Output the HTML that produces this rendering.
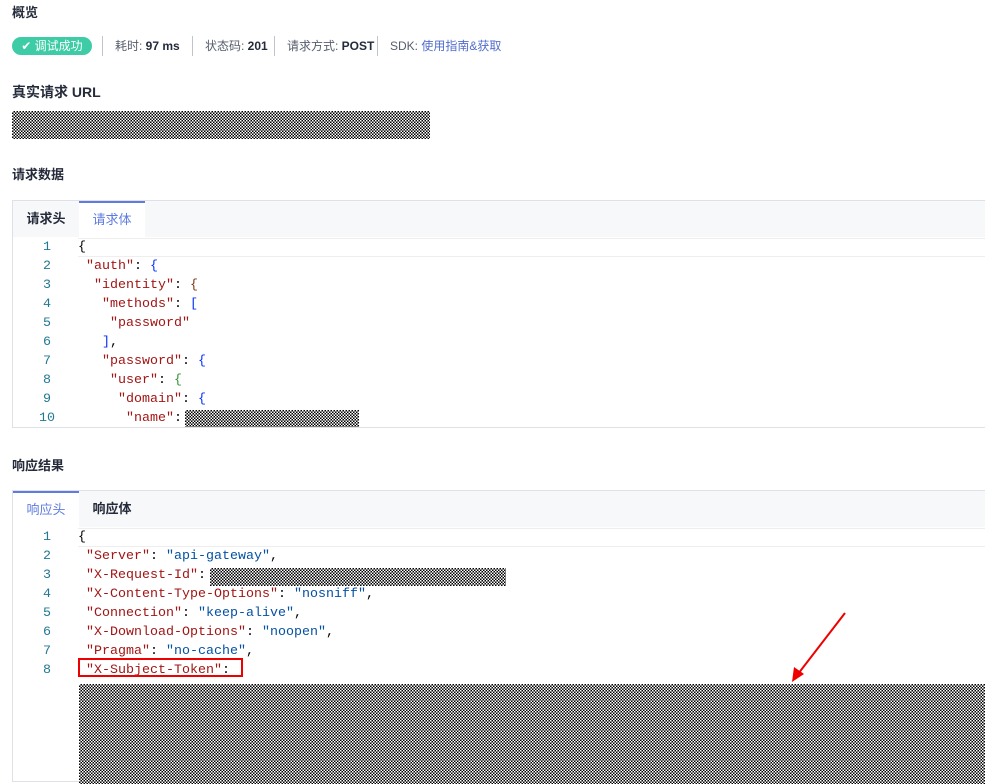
<!DOCTYPE html>
<html><head><meta charset="utf-8"><style>
body{margin:0;background:#fff;width:985px;height:775px;overflow:hidden;position:relative;font-family:"Liberation Sans","Noto Sans CJK SC",sans-serif;color:#252b3a}
.a{position:absolute}
h3{position:absolute;margin:0;font-size:13px;font-weight:bold;color:#252b3a}
.noise{position:absolute;background:repeating-conic-gradient(#000 0 25%,#fff 0 50%) 0 0/3px 3px}
.meta{position:absolute;top:38px;font-size:12px;color:#575d6c;line-height:16px}
.meta b{color:#252b3a}
.sep{position:absolute;top:36px;width:1px;height:20px;background:#c0c4cc}
.box{position:absolute;left:12px;width:973px;border:1px solid #dfe1e6;border-right:none;background:#fff}
.tabs{height:36px;background:#f7f8fa;position:relative}
.tab{position:absolute;top:0;height:36px;line-height:36px;font-size:13px;font-weight:bold;text-align:center}
.tab.on{background:#fff;color:#5e7ce0;border-top:2px solid #5e7ce0;height:34px;line-height:34px;font-weight:normal}
.code{position:absolute;left:0;right:0;font-family:"Liberation Mono",monospace;font-size:13.33px;line-height:19px}
.ln{position:absolute;left:0;width:68px;text-align:center;color:#237893}
.tx{position:absolute;left:65px;white-space:pre;color:#000}
.k{color:#a31515}.v{color:#0451a5}.p{color:#0431fa}.q{color:#319331}.r{color:#7b3814}
.hl{position:absolute;left:65px;right:0;height:17px;border-top:1px solid #eee;border-bottom:1px solid #eee}
</style></head><body>
<h3 style="left:12px;top:2px">概览</h3>
<div class="a" style="left:12px;top:37px;width:80px;height:18px;border-radius:9px;background:#3dcca6;color:#fff;font-size:12px;line-height:18px;text-align:center">✔ 调试成功</div>
<div class="sep" style="left:102px"></div>
<div class="meta" style="left:115px">耗时: <b>97 ms</b></div>
<div class="sep" style="left:192px"></div>
<div class="meta" style="left:205px">状态码: <b>201</b></div>
<div class="sep" style="left:274px"></div>
<div class="meta" style="left:287px">请求方式: <b>POST</b></div>
<div class="sep" style="left:377px"></div>
<div class="meta" style="left:390px">SDK: <span style="color:#526ecc">使用指南&amp;获取</span></div>
<h3 style="left:12px;top:82px;font-size:14px">真实请求 URL</h3>
<div class="noise" style="left:12px;top:111px;width:418px;height:28px"></div>
<h3 style="left:12px;top:164px">请求数据</h3>
<div class="box" style="top:200px;height:226px">
 <div class="tabs"><div class="tab" style="left:0;width:66px">请求头</div><div class="tab on" style="left:66px;width:66px">请求体</div></div>
 <div class="code" style="top:37px">
  <div class="hl" style="top:0"></div>
  <div class="ln" style="top:0">1</div><div class="tx" style="top:0">{</div>
  <div class="ln" style="top:19px">2</div><div class="tx" style="top:19px"> <span class="k">"auth"</span>: <span class="p">{</span></div>
  <div class="ln" style="top:38px">3</div><div class="tx" style="top:38px">  <span class="k">"identity"</span>: <span class="r">{</span></div>
  <div class="ln" style="top:57px">4</div><div class="tx" style="top:57px">   <span class="k">"methods"</span>: <span class="p">[</span></div>
  <div class="ln" style="top:76px">5</div><div class="tx" style="top:76px">    <span class="k">"password"</span></div>
  <div class="ln" style="top:95px">6</div><div class="tx" style="top:95px">   <span class="p">]</span>,</div>
  <div class="ln" style="top:114px">7</div><div class="tx" style="top:114px">   <span class="k">"password"</span>: <span class="p">{</span></div>
  <div class="ln" style="top:133px">8</div><div class="tx" style="top:133px">    <span class="k">"user"</span>: <span class="q">{</span></div>
  <div class="ln" style="top:152px">9</div><div class="tx" style="top:152px">     <span class="k">"domain"</span>: <span class="p">{</span></div>
  <div class="ln" style="top:171px">10</div><div class="tx" style="top:171px">      <span class="k">"name"</span>: </div>
 </div>
 <div class="noise" style="left:172px;top:209px;width:174px;height:17px"></div>
</div>
<h3 style="left:12px;top:455px">响应结果</h3>
<div class="box" style="top:490px;height:290px">
 <div class="tabs"><div class="tab on" style="left:0;width:66px">响应头</div><div class="tab" style="left:66px;width:66px">响应体</div></div>
 <div class="code" style="top:37px">
  <div class="hl" style="top:0"></div>
  <div class="ln" style="top:0">1</div><div class="tx" style="top:0">{</div>
  <div class="ln" style="top:19px">2</div><div class="tx" style="top:19px"> <span class="k">"Server"</span>: <span class="v">"api-gateway"</span>,</div>
  <div class="ln" style="top:38px">3</div><div class="tx" style="top:38px"> <span class="k">"X-Request-Id"</span>: </div>
  <div class="ln" style="top:57px">4</div><div class="tx" style="top:57px"> <span class="k">"X-Content-Type-Options"</span>: <span class="v">"nosniff"</span>,</div>
  <div class="ln" style="top:76px">5</div><div class="tx" style="top:76px"> <span class="k">"Connection"</span>: <span class="v">"keep-alive"</span>,</div>
  <div class="ln" style="top:95px">6</div><div class="tx" style="top:95px"> <span class="k">"X-Download-Options"</span>: <span class="v">"noopen"</span>,</div>
  <div class="ln" style="top:114px">7</div><div class="tx" style="top:114px"> <span class="k">"Pragma"</span>: <span class="v">"no-cache"</span>,</div>
  <div class="ln" style="top:133px">8</div><div class="tx" style="top:133px"> <span class="k">"X-Subject-Token"</span>:</div>
 </div>
 <div class="a" style="left:65px;top:167px;width:161px;height:15px;border:2px solid #e00"></div>
 <div class="noise" style="left:197px;top:77px;width:296px;height:18px"></div>
 <div class="noise" style="left:66px;top:193px;width:910px;height:100px"></div>
</div>
<svg class="a" style="left:0;top:0" width="985" height="775"><line x1="845" y1="613" x2="798" y2="674" stroke="#e00" stroke-width="2"/><polygon points="792,682 794,667 804,674" fill="#e00"/></svg>
</body></html>
